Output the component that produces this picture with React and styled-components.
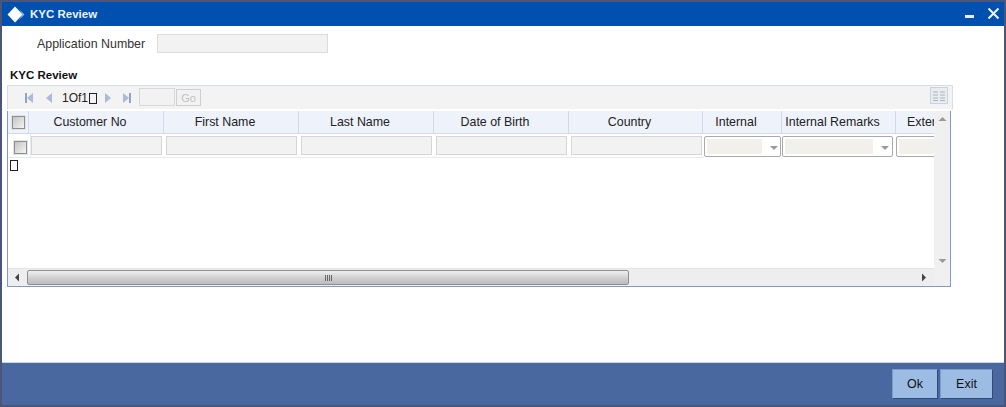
import React from "react";
import styled, { createGlobalStyle } from "styled-components";

const Global = createGlobalStyle`
  html, body { margin: 0; padding: 0; background: #fff; }
  body { font-family: "Liberation Sans", Arial, sans-serif; font-size: 12px; color: #222; }
`;
const Window = styled.div`
  width: 1006px; height: 407px; box-sizing: border-box;
  border: 2px solid #4a5578; display: flex; flex-direction: column; background: #fff; overflow: hidden;
`;
const TitleBar = styled.div`
  height: 24px; flex: none; background: #0050b0; display: flex; align-items: center;
  padding: 0 4px 0 5px; color: #fff;
`;
const TitleText = styled.span`
  font-size: 11.5px; font-weight: bold; color: #eef3fa; margin-left: 5px; flex: 1;
`;
const Controls = styled.div`display: flex; align-items: flex-start; gap: 11px; margin-top: -1px;`;
const Body = styled.div`flex: 1; padding: 8px 2px 0 5px; display: flex; flex-direction: column; min-height: 0;`;
const FieldRow = styled.div`display: flex; align-items: center; height: 19px; padding-left: 30px; gap: 12px;`;
const Label = styled.label`font-size: 12.4px; color: #333; width: 108px; white-space: nowrap;`;
const ReadOnly = styled.div`
  box-sizing: border-box; width: 171px; height: 19px; background: #f2f2f2; border: 1px solid #dcdcdc;
`;
const Section = styled.div`
  font-size: 11.5px; font-weight: bold; color: #111; margin: 15px 0 3px 3px; line-height: 14px; height: 14px;
`;
const Toolbar = styled.div`
  box-sizing: border-box; width: 946px; height: 25px; flex: none; background: #f3f3f3;
  border: 1px solid #d5dde6; border-bottom-color: #fff; display: flex; align-items: center; padding-left: 16px;
`;
const PagerBtn = styled.svg`width: 12px; height: 12px; flex: none; margin-right: ${p => p.$gap || 0}px;`;
const PageText = styled.span`font-size: 12px; color: #222; width: 27px; flex: none;`;
const Tofu = styled.span`
  display: inline-block; box-sizing: border-box; width: 8px; height: 11px; border: 1px solid #222; flex: none;
`;
const PageTofu = styled(Tofu)`margin: 1px 5px 0 0;`;
const PageInput = styled.div`
  box-sizing: border-box; width: 36px; height: 18px; border: 1px solid #d8d8d8; background: #f2f2f2;
  margin: 0 0 2px 7px;
`;
const GoBtn = styled.div`
  box-sizing: border-box; width: 25px; height: 17px; border: 1px solid #cfcfcf; background: #f2f2f2;
  color: #c2c2c2; font-size: 11px; margin: 0 0 1px 1px; display: flex; align-items: flex-end; justify-content: center;
  line-height: 13px;
`;
const GridToggle = styled.div`
  box-sizing: border-box; width: 18px; height: 17px; margin: 0 4px 4px auto;
  border: 1px solid #c9d2e2; background: #ececec; display: flex; align-items: center; justify-content: center;
`;
const TableBox = styled.div`
  box-sizing: border-box; width: 944px; height: 176px; margin-top: 1px; flex: none;
  border: 1px solid #7d9cc4; border-top: 0; display: grid; grid-template-columns: 1fr 16px; grid-template-rows: 1fr 18px;
`;
const Content = styled.div`overflow: hidden; min-width: 0; min-height: 0;`;
const HeadRow = styled.div`
  display: grid; grid-template-columns: 21px 135px 135px 135px 135px 134px 79px 114px 120px; width: 1008px;
  box-sizing: border-box; height: 23px; background: #eef2fb; border-bottom: 1px solid #d0daea;
`;
const Head = styled.div`
  border-right: 1px solid #cfdaea; box-sizing: border-box; display: flex; align-items: center;
  justify-content: ${p => (p.$left ? "flex-start" : "center")};
  padding: ${p => (p.$left ? "0 0 0 11px" : p.$check ? "0" : "0 12px 0 0")};
  font-size: 12.4px; color: #222; white-space: nowrap;
`;
const DataRow = styled.div`display: flex; height: 24px; width: 1008px;`;
const CheckCell = styled.div`
  flex: none; display: flex; box-sizing: border-box; width: 23px; padding: 7px 0 0 6px;
  border-right: 1px solid #e6ebf3; border-bottom: 1px solid #e6ebf3;
`;
const TextCell = styled.div`
  flex: none; box-sizing: border-box; width: ${p => p.$w}px; padding-top: 2px; display: flex; align-items: flex-start;
  border-bottom: ${p => (p.$plain ? "0" : "1px solid #e6ebf3")};
`;
const CellInput = styled.div`
  box-sizing: border-box; width: 131px; height: 19px; background: #f2f2f2; border: 1px solid #d6d6d6;
`;
const Check = styled.div`
  box-sizing: border-box; width: 13px; height: 13px; border: 1px solid #8e8e8e;
  background: linear-gradient(135deg, #c4c4c4, #f4f4f4); outline: 1px solid #e4e4e4;
`;
const SelectBox = styled.div`
  box-sizing: border-box; width: ${p => p.$w}px; height: 21px; border: 1px solid #a9a9a9; border-radius: 2px;
  padding: 2px; display: flex; align-items: stretch; background: #fff; flex: none;
`;
const SelectFill = styled.div`width: ${p => p.$w}px; flex: none; background: #f1f0ea;`;
const Caret = styled.span`
  margin: 7px 0 0 8px; width: 0; height: 0; border-left: 4px solid transparent; border-right: 4px solid transparent;
  border-top: 4px solid #999;
`;
const BlankRow = styled.div`padding: 2px 0 0 2px; line-height: 0;`;
const VScroll = styled.div`
  background: #f0f0f0; display: flex; flex-direction: column; justify-content: space-between; align-items: center;
  padding: 4px 0 3px;
`;
const HScroll = styled.div`
  background: #eeeeee; display: flex; align-items: center; border-top: 1px solid #e4e4e4; padding: 0 6px 0 5px;
`;
const Thumb = styled.div`
  box-sizing: border-box; width: 602px; height: 15px; margin-left: 5px; border: 1px solid #8f8f8f; border-radius: 2px;
  background: linear-gradient(#efefef, #d2d2d2 50%, #bcbcbc); display: flex; align-items: center; justify-content: center; gap: 1px;
`;
const Grip = styled.i`display: block; width: 1px; height: 6px; background: #666;`;
const EndArrow = styled.span`margin-left: auto; line-height: 0;`;
const Corner = styled.div`background: #f0f0f0;`;
const Footer = styled.div`
  height: 43px; flex: none; box-sizing: border-box; background: #4a68a0; border-top: 1px solid #c9d6ea;
  display: flex; align-items: center; justify-content: flex-end; gap: 2px; padding: 0 11px 1px 0;
`;
const Button = styled.button`
  box-sizing: border-box; width: ${p => p.$w}px; height: 30px; background: #9dbce4; padding: 0;
  border: 1px solid; border-color: #7e9ccb #2f4a7c #2f4a7c #7e9ccb;
  font: 12.5px "Liberation Sans", Arial, sans-serif; color: #111; font-weight: normal;
`;

const Tri = ({ dir, bar, gap }) => (
  <PagerBtn viewBox="0 0 12 12" $gap={gap}>
    {dir === "l" ? <polygon points="9,1 9,11 3,6" fill="#a9bbd8" /> : <polygon points="3,1 3,11 9,6" fill="#a9bbd8" />}
    {bar && <rect x={dir === "l" ? 1 : 9} y="1" width="2" height="10" fill="#8ea4c8" />}
  </PagerBtn>
);
const Arrow = ({ points, fill = "#444" }) => (
  <svg width="9" height="9" viewBox="0 0 9 9"><polygon points={points} fill={fill} /></svg>
);

const headers = ["Customer No", "First Name", "Last Name", "Date of Birth", "Country", "Internal", "Internal Remarks"];

export default function App() {
  return (
    <Window>
      <Global />
      <TitleBar>
        <svg width="18" height="17" viewBox="0 0 18 17">
          <polygon points="8,0.5 15.5,8.5 8,16.5 0.5,8.5" fill="#fff" />
          <polygon points="12,3 17.5,8.5 12,14 15.5,8.5" fill="#9db8dc" />
        </svg>
        <TitleText>KYC Review</TitleText>
        <Controls>
          <svg width="12" height="12" viewBox="0 0 12 12"><rect x="1" y="8" width="9" height="3" fill="#e8eef8" /></svg>
          <svg width="13" height="13" viewBox="0 0 13 13"><path d="M1.5 1.5 L11.5 11.5 M11.5 1.5 L1.5 11.5" stroke="#f2f6fc" strokeWidth="2" /></svg>
        </Controls>
      </TitleBar>
      <Body>
        <FieldRow>
          <Label>Application Number</Label>
          <ReadOnly />
        </FieldRow>
        <Section>KYC Review</Section>
        <Toolbar>
          <Tri dir="l" bar gap={7} />
          <Tri dir="l" gap={7} />
          <PageText>1Of1</PageText>
          <PageTofu />
          <Tri dir="r" gap={6} />
          <Tri dir="r" bar />
          <PageInput />
          <GoBtn>Go</GoBtn>
          <GridToggle>
            <svg width="12" height="10" viewBox="0 0 12 10">
              <path d="M0 1h5M7 1h5M0 4h5M7 4h5M0 7h5M7 7h5M0 9.5h5M7 9.5h5" stroke="#a4b2cb" strokeWidth="1" />
            </svg>
          </GridToggle>
        </Toolbar>
        <TableBox>
          <Content>
            <HeadRow>
              <Head $check><Check /></Head>
              {headers.map(h => <Head key={h}>{h}</Head>)}
              <Head $left>External</Head>
            </HeadRow>
            <DataRow>
              <CheckCell><Check /></CheckCell>
              {[0, 1, 2, 3, 4].map(i => (
                <TextCell key={i} $w={i === 4 ? 133 : 135}><CellInput /></TextCell>
              ))}
              <TextCell $w={78} $plain>
                <SelectBox $w={77}><SelectFill $w={55} /><Caret /></SelectBox>
              </TextCell>
              <TextCell $w={114} $plain>
                <SelectBox $w={111}><SelectFill $w={88} /><Caret /></SelectBox>
              </TextCell>
              <TextCell $w={80} $plain>
                <SelectBox $w={80}><SelectFill $w={55} /></SelectBox>
              </TextCell>
            </DataRow>
            <BlankRow><Tofu /></BlankRow>
          </Content>
          <VScroll>
            <Arrow points="0.5,6 8.5,6 4.5,2" fill="#9a9a9a" />
            <Arrow points="0.5,3 8.5,3 4.5,7" fill="#9a9a9a" />
          </VScroll>
          <HScroll>
            <Arrow points="6,0.5 6,8.5 2,4.5" />
            <Thumb><Grip /><Grip /><Grip /><Grip /></Thumb>
            <EndArrow><Arrow points="3,0.5 3,8.5 7,4.5" /></EndArrow>
          </HScroll>
          <Corner />
        </TableBox>
      </Body>
      <Footer>
        <Button $w={46}>Ok</Button>
        <Button $w={53}>Exit</Button>
      </Footer>
    </Window>
  );
}
